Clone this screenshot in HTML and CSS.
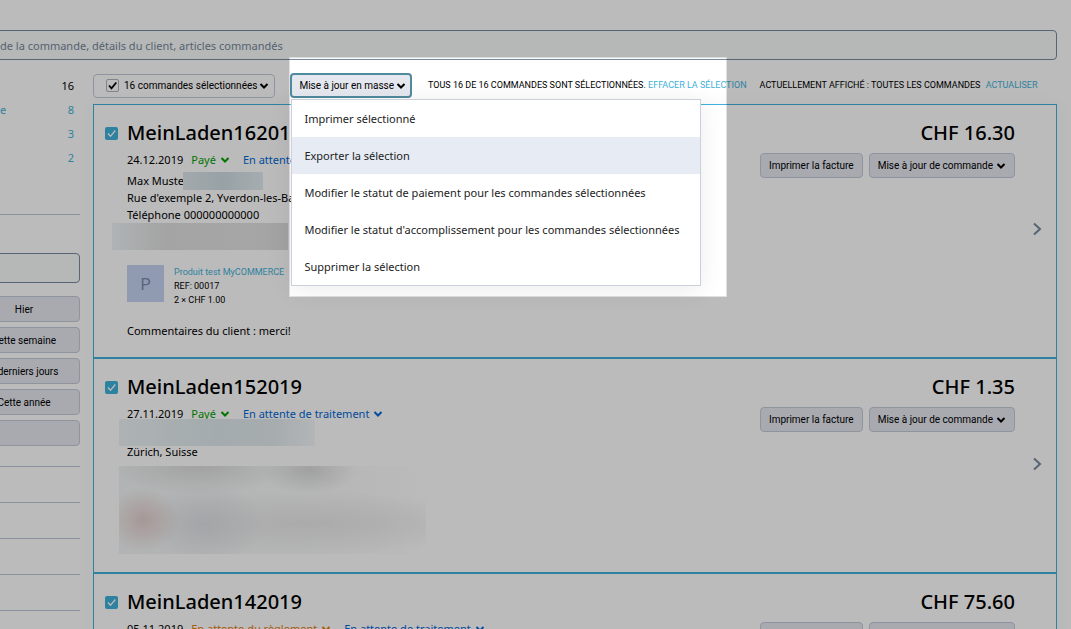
FILE: index.html
```html
<!DOCTYPE html>
<html lang="fr">
<head>
    <meta charset="UTF-8">
    <meta name="viewport" content="width=device-width, initial-scale=1.0">
    <title>Commandes</title>
    <link rel="stylesheet" href="styles.css">
</head>
<body>
    <svg class="sprite" aria-hidden="true">
        <symbol id="chevron" viewBox="0 0 10 8"><path d="M1.5 2 L5 5.5 L8.5 2" fill="none" stroke="currentColor" stroke-width="2"/></symbol>
        <symbol id="arrow" viewBox="0 0 10 14"><path d="M2 1.5 L8 7 L2 12.5" fill="none" stroke="currentColor" stroke-width="2"/></symbol>
    </svg>

    <div class="search">
        <input type="text" class="search-input" aria-label="Rechercher" placeholder="de la commande, détails du client, articles commandés">
    </div>

    <div class="layout">
        <aside class="sidebar">
            <ul class="counts">
                <li class="current"><span></span><span>16</span></li>
                <li><a href="#">e</a><a href="#">8</a></li>
                <li><span></span><a href="#">3</a></li>
                <li><span></span><a href="#">2</a></li>
            </ul>
            <div class="filter">
                <input type="text" class="filter-input" aria-label="Date">
                <button type="button" class="btn">Hier</button>
                <button type="button" class="btn">Cette semaine</button>
                <button type="button" class="btn">7 derniers jours</button>
                <button type="button" class="btn">Cette année</button>
                <button type="button" class="btn" aria-label="Période"></button>
            </div>
            <div class="section"></div>
            <div class="section"></div>
            <div class="section"></div>
            <div class="section"></div>
            <div class="section"></div>
        </aside>

        <main class="main">
            <div class="toolbar">
                <div class="select-all">
                    <input type="checkbox" id="all" class="check check-plain" checked>
                    <label for="all">16 commandes sélectionnées</label>
                    <svg class="chevron"><use href="#chevron"/></svg>
                </div>
                <div class="bulk">
                    <button type="button" class="btn btn-bulk">Mise à jour en masse <svg class="chevron"><use href="#chevron"/></svg></button>
                    <div class="spotlight"></div>
                    <ul class="menu">
                        <li><button type="button">Imprimer sélectionné</button></li>
                        <li><button type="button" class="active">Exporter la sélection</button></li>
                        <li><button type="button">Modifier le statut de paiement pour les commandes sélectionnées</button></li>
                        <li><button type="button">Modifier le statut d'accomplissement pour les commandes sélectionnées</button></li>
                        <li><button type="button">Supprimer la sélection</button></li>
                    </ul>
                </div>
                <p class="notice">TOUS 16 DE 16 COMMANDES SONT SÉLECTIONNÉES. <a href="#">EFFACER LA SÉLECTION</a></p>
                <p class="notice">ACTUELLEMENT AFFICHÉ : TOUTES LES COMMANDES <a href="#" class="refresh">ACTUALISER</a></p>
            </div>

            <div class="orders">
                <article class="order">
                    <input type="checkbox" class="check" aria-label="MeinLaden162019" checked>
                    <div class="info">
                        <h2>MeinLaden162019</h2>
                        <div class="status">
                            <span>24.12.2019</span>
                            <button type="button" class="link paid">Payé <svg class="chevron"><use href="#chevron"/></svg></button>
                            <button type="button" class="link pending">En attente de traitement <svg class="chevron"><use href="#chevron"/></svg></button>
                        </div>
                        <p class="line">Max Muste<span class="mask mask-name"></span></p>
                        <p class="line">Rue d'exemple 2, Yverdon-les-Bains</p>
                        <p class="line">Téléphone 000000000000</p>
                        <div class="mask mask-mail"></div>
                        <div class="product">
                            <div class="thumb">P</div>
                            <div>
                                <a href="#">Produit test MyCOMMERCE</a>
                                <p>REF: 00017</p>
                                <p>2 × CHF 1.00</p>
                            </div>
                        </div>
                        <p class="line comment">Commentaires du client : merci!</p>
                    </div>
                    <div class="side">
                        <div class="total">CHF 16.30</div>
                        <div class="actions">
                            <button type="button" class="btn">Imprimer la facture</button>
                            <button type="button" class="btn">Mise à jour de commande <svg class="chevron"><use href="#chevron"/></svg></button>
                        </div>
                    </div>
                    <a href="#" class="open" aria-label="Ouvrir"><svg><use href="#arrow"/></svg></a>
                </article>

                <article class="order">
                    <input type="checkbox" class="check" aria-label="MeinLaden152019" checked>
                    <div class="info">
                        <h2>MeinLaden152019</h2>
                        <div class="status">
                            <span>27.11.2019</span>
                            <button type="button" class="link paid">Payé <svg class="chevron"><use href="#chevron"/></svg></button>
                            <button type="button" class="link pending">En attente de traitement <svg class="chevron"><use href="#chevron"/></svg></button>
                        </div>
                        <p class="line"><span class="mask mask-customer"></span></p>
                        <p class="line">Zürich, Suisse</p>
                        <div class="mask mask-items"></div>
                    </div>
                    <div class="side">
                        <div class="total">CHF 1.35</div>
                        <div class="actions">
                            <button type="button" class="btn">Imprimer la facture</button>
                            <button type="button" class="btn">Mise à jour de commande <svg class="chevron"><use href="#chevron"/></svg></button>
                        </div>
                    </div>
                    <a href="#" class="open" aria-label="Ouvrir"><svg><use href="#arrow"/></svg></a>
                </article>

                <article class="order order-tall">
                    <input type="checkbox" class="check" aria-label="MeinLaden142019" checked>
                    <div class="info">
                        <h2>MeinLaden142019</h2>
                        <div class="status">
                            <span>05.11.2019</span>
                            <button type="button" class="link unpaid">En attente du règlement <svg class="chevron"><use href="#chevron"/></svg></button>
                            <button type="button" class="link pending">En attente de traitement <svg class="chevron"><use href="#chevron"/></svg></button>
                        </div>
                    </div>
                    <div class="side">
                        <div class="total">CHF 75.60</div>
                        <div class="actions">
                            <button type="button" class="btn">Imprimer la facture</button>
                            <button type="button" class="btn">Mise à jour de commande <svg class="chevron"><use href="#chevron"/></svg></button>
                        </div>
                    </div>
                    <a href="#" class="open" aria-label="Ouvrir"><svg><use href="#arrow"/></svg></a>
                </article>
            </div>
        </main>
    </div>
</body>
</html>
```
FILE: styles.css
```css
* {
    margin: 0;
    padding: 0;
    box-sizing: border-box;
}

body {
    height: 100vh;
    overflow: hidden;
    padding-top: 30px;
    background-color: #fff;
    color: #000;
    font-family: "Noto Sans", "Open Sans", sans-serif;
    font-size: 11px;
    line-height: 17px;
}

a {
    color: #40b2da;
    text-decoration: none;
}

ul {
    list-style: none;
}

button,
input {
    font: inherit;
    color: inherit;
}

.sprite {
    display: none;
}

.chevron {
    width: 10px;
    height: 8px;
    flex: none;
}

/* search */
.search {
    margin: 0 14px 0 -6px;
}

.search-input {
    display: block;
    width: 100%;
    height: 30px;
    padding: 0 5px;
    border: 1px solid #76899d;
    border-radius: 4px;
    background-color: #f8fbfa;
}

.search-input::placeholder {
    color: #76869a;
    opacity: 1;
}

.layout {
    display: flex;
    gap: 13px;
    padding-right: 14px;
}

/* sidebar */
.sidebar {
    flex: none;
    width: 80px;
}

.counts {
    padding: 14px 6px 0 0;
}

.counts li {
    display: flex;
    justify-content: space-between;
    height: 24px;
    line-height: 24px;
}

.filter {
    display: flex;
    flex-direction: column;
    gap: 5px;
    margin: 44px 0 0 -32px;
    padding: 38px 0 20px;
    border-top: 1px solid #bac8d8;
}

.filter-input {
    width: 100%;
    height: 30px;
    margin-bottom: 8px;
    border: 1px solid #76899d;
    border-radius: 4px;
    background-color: #f8fbfa;
}

.section {
    height: 36px;
    border-top: 1px solid #bac8d8;
}

.btn {
    display: flex;
    align-items: center;
    justify-content: center;
    gap: 3px;
    height: 25px;
    padding: 0 8px;
    border: 1px solid #c2cbd9;
    border-radius: 4px;
    background-color: #e6e8f0;
    font-family: Roboto, sans-serif;
    font-size: 10px;
    white-space: nowrap;
}

.sidebar .btn {
    height: 26px;
}

/* toolbar */
.main {
    flex: 1;
    min-width: 0;
}

.toolbar {
    display: flex;
    align-items: center;
    height: 44px;
    padding-top: 7px;
    font-family: Roboto, sans-serif;
    font-size: 10px;
    white-space: nowrap;
}

.select-all {
    display: flex;
    align-items: center;
    gap: 2px;
    height: 24px;
    margin-right: 15px;
    padding: 0 5px 0 12px;
    border: 1px solid #c2cbd9;
    border-radius: 4px;
}

.select-all .check {
    margin-right: 3px;
}

.check {
    flex: none;
    width: 13px;
    height: 13px;
    appearance: none;
    border-radius: 2px;
    background: #3fb2da url("data:image/svg+xml,%3Csvg xmlns='http://www.w3.org/2000/svg' viewBox='0 0 13 13'%3E%3Cpath d='M3 6.5l2.5 2.8L10.3 3.5' fill='none' stroke='%23fff' stroke-width='1.3'/%3E%3C/svg%3E") center / 13px;
}

.check-plain {
    border: 1px solid #aab4c2;
    background: #fff url("data:image/svg+xml,%3Csvg xmlns='http://www.w3.org/2000/svg' viewBox='0 0 13 13'%3E%3Cpath d='M3 6.5l2.5 2.8L10.3 3.5' fill='none' stroke='%23000' stroke-width='1.8'/%3E%3C/svg%3E") center / 13px;
}

.bulk {
    position: relative;
    margin-right: 16px;
}

.btn-bulk {
    gap: 2px;
    padding: 0 4px 0 7px;
    border: 2px solid #508a9d;
}

/* dims the page around the open menu */
.spotlight {
    position: absolute;
    top: -16px;
    left: -1px;
    z-index: 1;
    width: 438px;
    height: 240px;
    border: 1px solid rgba(0, 0, 0, 0.12);
    box-shadow: 0 0 0 2000px rgba(0, 0, 0, 0.266);
    pointer-events: none;
}

.menu {
    position: absolute;
    top: 26px;
    left: 1px;
    z-index: 2;
    width: 410px;
    border: 1px solid #cbd0dc;
    background-color: #fff;
    box-shadow: 0 4px 24px rgba(0, 0, 0, 0.08);
    font-family: "Noto Sans", "Open Sans", sans-serif;
    font-size: 11px;
}

.menu button {
    display: block;
    width: 100%;
    height: 37px;
    padding: 0 12px;
    border: none;
    background: none;
    color: #222;
    text-align: left;
}

.menu .active {
    background-color: #e6ebf4;
}

.notice {
    font-size: 9px;
}

.notice + .notice {
    margin-left: 13px;
}

.refresh {
    margin-left: 3px;
}

/* orders */
.orders {
    box-shadow: 0 0 16px rgba(0, 0, 0, 0.04);
}

.order {
    display: flex;
    padding: 14px 14px 18px 11px;
    border: 1px solid #3fb2da;
}

.order-tall {
    min-height: 214px;
}

.order .check {
    margin: 8px 9px 0 0;
}

.info {
    flex: 1;
}

.info h2,
.total {
    font-size: 20px;
    font-weight: 500;
    line-height: 28px;
}

.status {
    display: flex;
    align-items: center;
    gap: 8px;
    height: 25px;
}

.link {
    display: flex;
    align-items: center;
    gap: 4px;
    margin-right: 5px;
    border: none;
    background: none;
}

.paid {
    color: #00a000;
}

.pending {
    color: #0068d8;
}

.unpaid {
    color: #e08010;
}

.line {
    position: relative;
    height: 17px;
}

.mask-name {
    position: absolute;
    top: 0;
    left: 56px;
    width: 80px;
    height: 18px;
    background: linear-gradient(90deg, #dee7ea, #cfdde3 50%, #e2ecf0);
}

.mask-mail {
    height: 27px;
    margin-left: -15px;
    width: 176px;
    background: linear-gradient(90deg, #eff5f8, #dfe0df 30%, #e2e3e2 80%, #dcdddc);
}

.mask-customer {
    position: absolute;
    top: -7px;
    left: -8px;
    width: 196px;
    height: 27px;
    background: linear-gradient(90deg, #edf3f5, #e0eaee 50%, #e4ebee 80%, #f5f8fa);
}

.mask-items {
    width: 307px;
    height: 88px;
    margin: 6px 0 0 -8px;
    background:
        radial-gradient(ellipse 36px 32px at 24px 54px, #e3cfcd, transparent),
        radial-gradient(ellipse 90px 28px at 80px 0, #dcdddc, transparent),
        radial-gradient(ellipse 48px 24px at 190px 4px, #dadcda, transparent),
        radial-gradient(ellipse 60px 40px at 86px 58px, #dfe2e5, transparent),
        radial-gradient(ellipse 180px 32px at 190px 57px, #e9e9e9, transparent),
        linear-gradient(90deg, #f2f5f6, #fbfbfb 80%, #fff);
}

.product {
    display: flex;
    gap: 10px;
    margin: 15px 0;
    font-family: Roboto, sans-serif;
    font-size: 9px;
    line-height: 14px;
}

.thumb {
    width: 37px;
    height: 37px;
    background-color: #c5d2f2;
    color: #7b8aab;
    font-size: 16px;
    line-height: 40px;
    text-align: center;
}

.side {
    display: flex;
    flex-direction: column;
    align-items: flex-end;
    gap: 6px;
}

.actions {
    display: flex;
    gap: 6px;
}

.open {
    align-self: center;
    margin-left: 17px;
    color: #76899d;
}

.open svg {
    display: block;
    width: 10px;
    height: 14px;
}
```
